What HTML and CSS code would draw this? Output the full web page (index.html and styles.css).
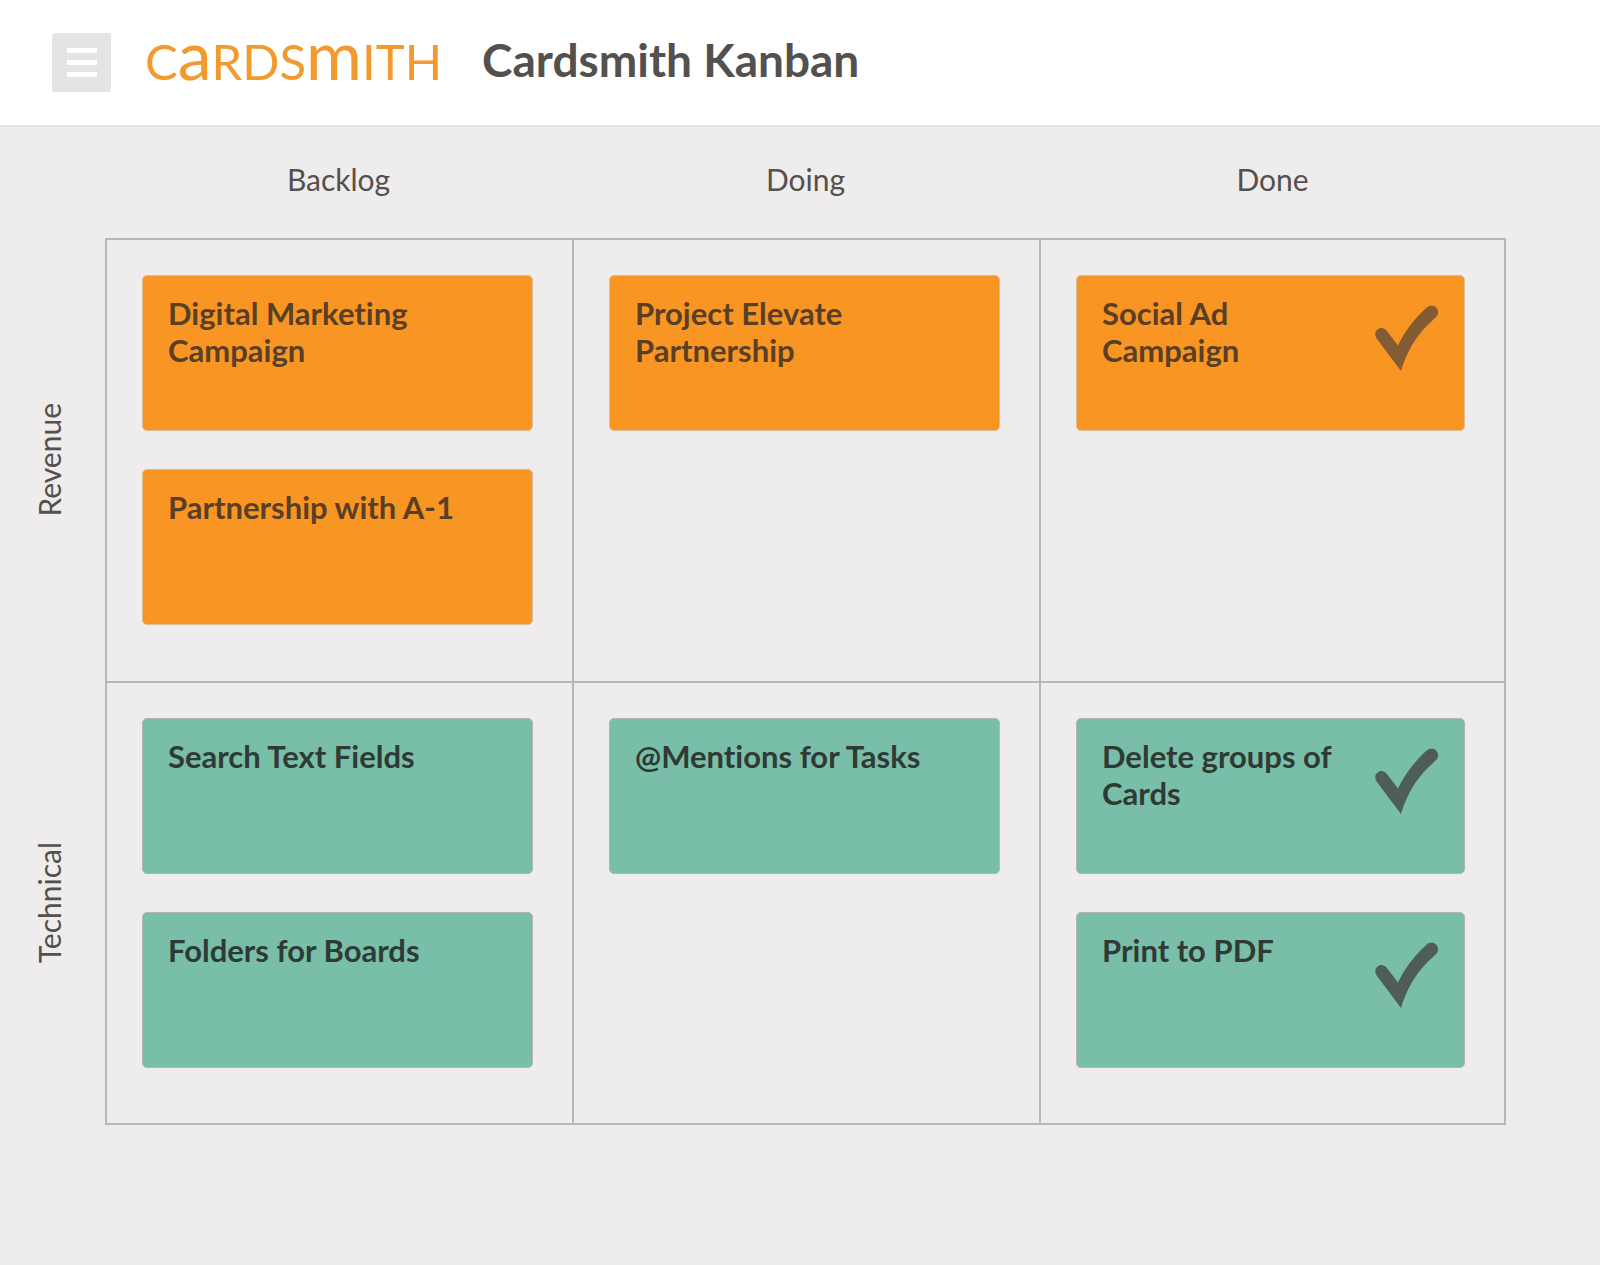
FILE: index.html
```html
<!DOCTYPE html>
<html lang="en">
<head>
    <meta charset="UTF-8">
    <meta name="viewport" content="width=device-width, initial-scale=1.0">
    <title>Cardsmith Kanban</title>
    <link rel="stylesheet" href="styles.css">
</head>
<body>
    <!-- Shared check mark -->
    <svg class="defs" aria-hidden="true">
        <symbol id="check" viewBox="0 0 64 66">
            <path d="M1.6 33.4 C-.6 30 0 26.500 2.600 24.500 C5.500 22.200 9 22.600 11.500 25.500 L23 40.500 C28.500 29 38 14.500 52 2.300 C55 .2 59 .4 61.300 2.800 C64 5.800 63.600 9.700 61 12.300 C46 25.500 34.500 39 26 66 Z"/>
        </symbol>
    </svg>

    <header class="topbar">
        <button class="menu-btn" type="button" aria-label="Menu">
            <svg width="30" height="30" viewBox="0 0 30 30">
                <path d="M0 0h30v5H0zM0 12h30v5H0zM0 24h30v5H0z"/>
            </svg>
        </button>
        <a class="logo" href="#">C<span class="tall">a</span>RDS<span class="tall">m</span>ITH</a>
        <h1>Cardsmith Kanban</h1>
    </header>

    <main class="board">
        <!-- Column headings -->
        <div class="corner"></div>
        <h2 class="col-title">Backlog</h2>
        <h2 class="col-title">Doing</h2>
        <h2 class="col-title">Done</h2>

        <!-- Revenue -->
        <div class="row-title"><h2>Revenue</h2></div>
        <section class="cell">
            <article class="card orange"><h3>Digital Marketing Campaign</h3></article>
            <article class="card orange"><h3>Partnership with A-1</h3></article>
        </section>
        <section class="cell">
            <article class="card orange"><h3>Project Elevate Partnership</h3></article>
        </section>
        <section class="cell last">
            <article class="card orange">
                <h3>Social Ad Campaign</h3>
                <svg class="check"><use href="#check"/></svg>
            </article>
        </section>

        <!-- Technical -->
        <div class="row-title"><h2>Technical</h2></div>
        <section class="cell bottom">
            <article class="card green"><h3>Search Text Fields</h3></article>
            <article class="card green"><h3>Folders for Boards</h3></article>
        </section>
        <section class="cell bottom">
            <article class="card green"><h3>@Mentions for Tasks</h3></article>
        </section>
        <section class="cell bottom last">
            <article class="card green">
                <h3>Delete groups of Cards</h3>
                <svg class="check"><use href="#check"/></svg>
            </article>
            <article class="card green">
                <h3>Print to PDF</h3>
                <svg class="check"><use href="#check"/></svg>
            </article>
        </section>
    </main>
</body>
</html>
```
FILE: styles.css
```css
* {
    box-sizing: border-box;
}

body {
    font-family: Lato, 'Open Sans', sans-serif;
    font-variant-ligatures: none;
    margin: 0;
    background: #eeecec;
    color: #54504e;
    min-height: 100vh;
}

h1, h2, h3 {
    margin: 0;
}

.defs {
    display: none;
}

/* Header */
.topbar {
    display: flex;
    align-items: center;
    height: 127px;
    padding: 0 52px;
    background: #fff;
    border-bottom: 2px solid #e5e4e4;
}

.menu-btn {
    display: flex;
    align-items: center;
    justify-content: center;
    width: 59px;
    height: 59px;
    padding: 0;
    border: none;
    border-radius: 3px;
    background: #e5e3e4;
    cursor: pointer;
}

.menu-btn svg {
    fill: #fff;
}

.logo {
    margin-left: 34px;
    margin-bottom: 10px;
    color: #f29a2e;
    font-size: 49px;
    line-height: 60px;
    text-decoration: none;
}

.logo .tall {
    font-size: 68px;
}

h1 {
    margin-left: 40px;
    margin-bottom: 5px;
    font-size: 46px;
    line-height: 60px;
    font-weight: 700;
}

/* Board */
.board {
    display: grid;
    grid-template-columns: 105px repeat(3, 1fr);
    padding-right: 94px;
    padding-bottom: 80px;
}

.col-title,
.row-title h2 {
    font-size: 30px;
    line-height: 36px;
    font-weight: 400;
}

.col-title {
    height: 111px;
    padding-top: 34px;
    text-align: center;
}

.row-title {
    display: flex;
    align-items: center;
    justify-content: center;
    padding-right: 8px;
}

.row-title h2 {
    writing-mode: vertical-rl;
    transform: rotate(180deg);
}

.cell {
    display: flex;
    flex-direction: column;
    gap: 38px;
    min-height: 443px;
    padding: 35px 39px 55px 35px;
    border-top: 2px solid #b9b7b6;
    border-left: 2px solid #b9b7b6;
}

.cell.last {
    border-right: 2px solid #b9b7b6;
}

.cell.bottom {
    border-bottom: 2px solid #b9b7b6;
}

/* Cards */
.card {
    display: flex;
    justify-content: space-between;
    gap: 24px;
    min-height: 156px;
    padding: 19px 25px;
    border: 1px solid #b3b5ae;
    border-radius: 5px;
}

.card h3 {
    max-width: 310px;
    font-size: 31px;
    line-height: 37px;
    font-weight: 700;
}

.orange {
    background: #f99522;
    border-color: #d9bd96;
    color: #593f25;
}

.green {
    background: #79bea8;
    color: #2f3a35;
}

.check {
    flex: none;
    width: 64px;
    height: 66px;
    margin-top: 10px;
    fill: #4f5d57;
}

.orange .check {
    fill: #845c33;
}
```
